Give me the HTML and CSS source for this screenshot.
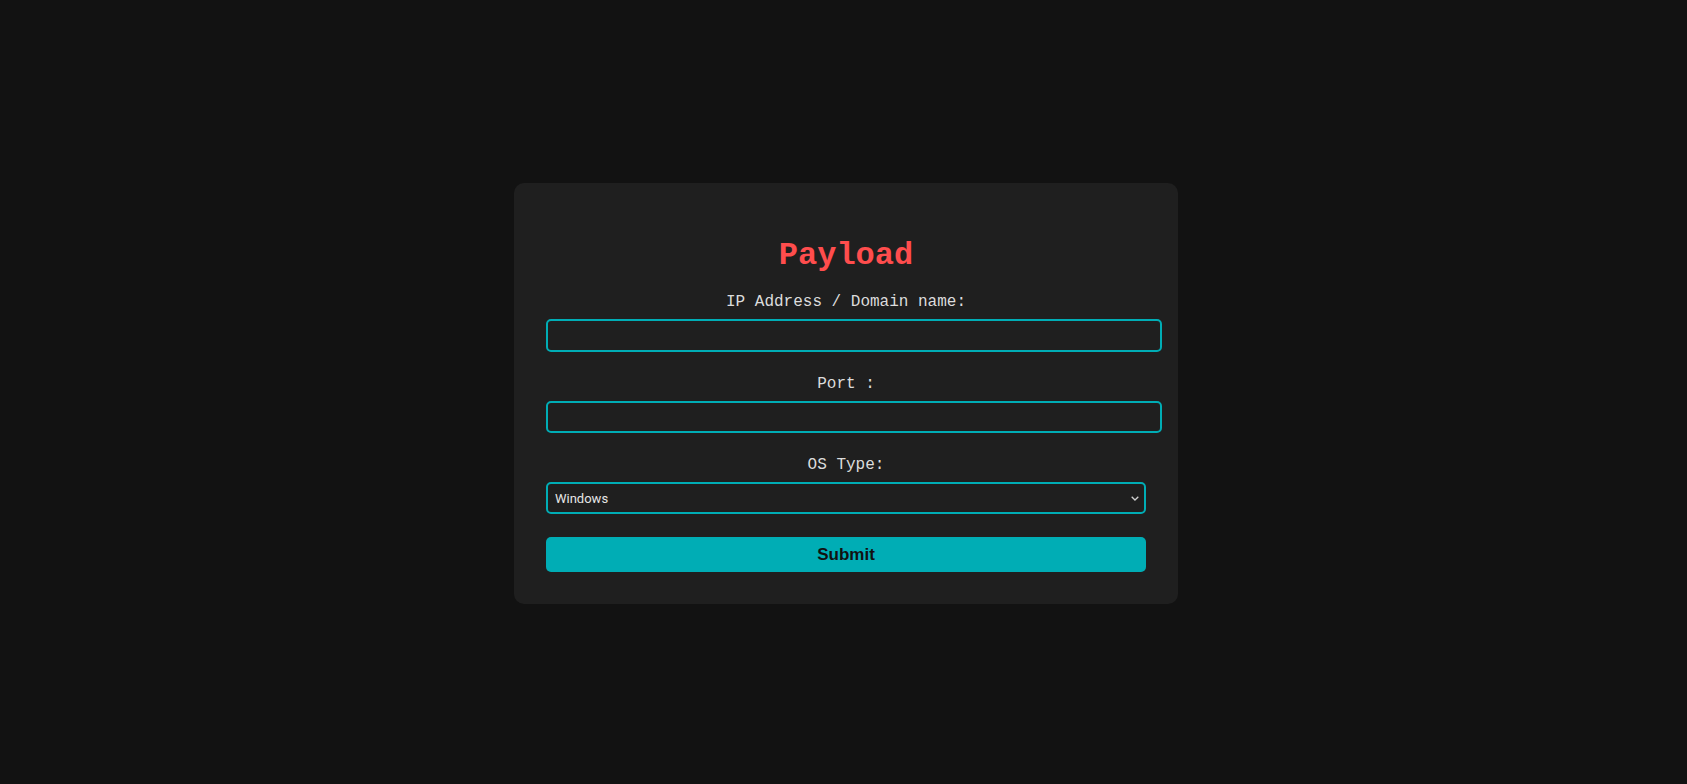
FILE: index.html
```
<!DOCTYPE html>
<html lang="en">
<head>
<meta charset="utf-8">
<title>Payload</title>
<link rel="stylesheet" href="styles.css">
</head>
<body>
<main class="page">
  <form class="card" onsubmit="return false;">
    <h1 class="title">Payload</h1>
    <div class="group">
      <label class="label" for="ip">IP Address / Domain name:</label>
      <input class="field" id="ip" type="text">
    </div>
    <div class="group">
      <label class="label" for="port">Port :</label>
      <input class="field" id="port" type="text">
    </div>
    <div class="group">
      <label class="label" for="os">OS Type:</label>
      <div class="select-wrap">
        <select class="select" id="os">
          <option>Windows</option>
          <option>Linux</option>
        </select>
        <svg class="chevron" width="8" height="5" viewBox="0 0 8 5" aria-hidden="true">
          <path d="M0.7 0.7 L4 4 L7.3 0.7" fill="none" stroke="#d0d0d0" stroke-width="1.3"/>
        </svg>
      </div>
    </div>
    <button class="submit" type="submit">Submit</button>
  </form>
</main>
</body>
</html>
```

FILE: styles.css
```
html, body {
  margin: 0;
  padding: 0;
  background: #121212;
}

.page {
  min-height: 100vh;
  display: flex;
  align-items: center;
  justify-content: center;
  padding-left: 5px;
  padding-top: 3px;
  box-sizing: border-box;
}

.card {
  width: 600px;
  padding: 32px;
  background: #1f1f1f;
  border-radius: 10px;
  font-family: "Liberation Mono", "Courier New", monospace;
  color: #dcdcdc;
  text-align: center;
}

.title {
  margin: 23.4px 0 19.4px;
  font-size: 32px;
  font-weight: bold;
  color: #ff4d4d;
  line-height: 36px;
}

.group {
  margin-bottom: 23px;
}

.label {
  display: block;
  font-size: 16px;
  line-height: 18px;
  margin-bottom: 8px;
  color: #dcdcdc;
}

.field {
  display: block;
  box-sizing: border-box;
  width: 616px;
  height: 32.5px;
  margin: 0;
  padding: 6px;
  background: #1f1f1f;
  border: 2px solid #00adb5;
  border-radius: 5px;
  color: #e0e0e0;
  font-family: "Liberation Mono", monospace;
  font-size: 14px;
  outline: none;
}

.select-wrap {
  position: relative;
  width: 600px;
}

.select {
  display: block;
  box-sizing: border-box;
  width: 600px;
  height: 32px;
  margin: 0;
  padding: 0 24px 0 7px;
  appearance: none;
  -webkit-appearance: none;
  background-color: #1f1f1f;
  border: 2px solid #00adb5;
  border-radius: 5px;
  color: #e6e6e6;
  font-family: Roboto, "Noto Sans", sans-serif;
  font-size: 13px;
  outline: none;
}

.chevron {
  position: absolute;
  right: 7px;
  top: 14px;
  pointer-events: none;
}

.submit {
  display: block;
  width: 600px;
  height: 35px;
  margin: 0;
  padding: 0;
  background: #00adb5;
  border: none;
  border-radius: 5px;
  color: #111111;
  font-family: "Liberation Sans", Arial, sans-serif;
  font-weight: bold;
  font-size: 17px;
  cursor: pointer;
}
```
